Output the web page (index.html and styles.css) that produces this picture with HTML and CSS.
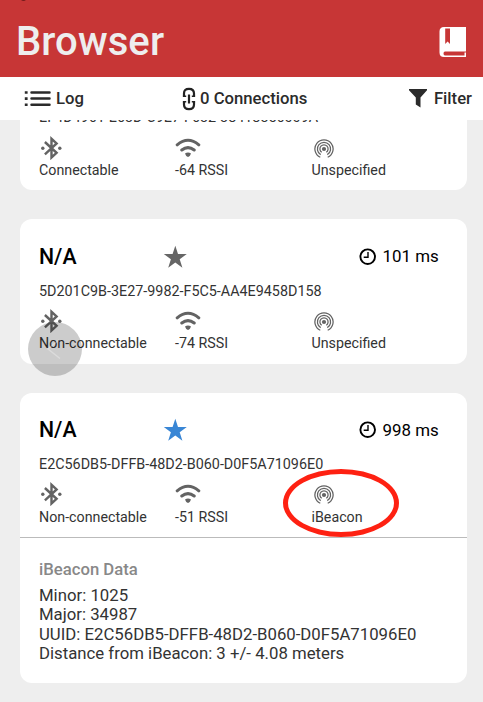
FILE: index.html
```
<!DOCTYPE html>
<html lang="en">
<head>
<meta charset="utf-8">
<title>Browser</title>
<link rel="stylesheet" href="styles.css">
</head>
<body>
<svg class="defs" aria-hidden="true">
  <symbol id="bt" viewBox="0 0 22 24">
    <path d="M4.900 6 16.600 16.800 11.500 21.500V2.800L16.600 7.400 4.900 18.300" fill="none" stroke="currentColor" stroke-width="2.400"/>
    <circle cx="2.800" cy="12.200" r="1.700" fill="currentColor"/><circle cx="19.800" cy="12.200" r="1.700" fill="currentColor"/>
  </symbol>
  <symbol id="wifi" viewBox="0 0 26 24">
    <path d="M2.200 8.800Q13-.2 23.800 8.800M6.800 14Q13 9.200 19.200 14" fill="none" stroke="currentColor" stroke-width="3" stroke-linecap="round"/>
    <path d="M10 17.400Q13 15.400 16 17.400Q15.500 19.700 13 21Q10.500 19.700 10 17.400Z" fill="currentColor"/>
  </symbol>
  <symbol id="beacon" viewBox="0 0 20 20">
    <g fill="none" stroke="currentColor" stroke-width="1.250">
      <path d="M6.300 18.300A9.100 9.100 0 1 1 13.700 18.300"/>
      <path d="M6.700 15.600A6.600 6.600 0 1 1 13.300 15.600"/>
      <path d="M7.700 13.300A4.100 4.100 0 1 1 12.300 13.300"/>
    </g>
    <circle cx="10" cy="10" r="2.100" fill="currentColor"/>
  </symbol>
  <symbol id="star" viewBox="0 0 24 24">
    <path d="M12.300 .8 15 9H23.800L16.700 14.200 19.400 22.800 12.300 17.600 5.200 22.800 7.900 14.200.8 9H9.600Z" fill="currentColor"/>
  </symbol>
  <symbol id="clock" viewBox="0 0 18 18">
    <circle cx="8.700" cy="8.700" r="7.300" fill="none" stroke="currentColor" stroke-width="1.900"/>
    <path d="M9 4V9.200H4.700" fill="none" stroke="currentColor" stroke-width="1.400"/>
  </symbol>
</svg>

<div class="screen">
  <header class="header">
    <span class="camera"></span>
    <h1 class="title">Browser</h1>
    <svg class="book" viewBox="0 0 28 32">
      <path d="M5 1H27V25.500H6Q4.500 25.500 4.500 27.500T6 29.500H25.500V26.500H27V31H5Q.5 31 .5 26.500V5.500Q.5 1 5 1Z" fill="#fff"/>
      <path d="M6.200 2.500H11V18L8.600 15.600 6.200 18Z" fill="#c73636"/>
    </svg>
  </header>

  <nav class="toolbar">
    <div class="tool log">
      <svg width="27" height="18" viewBox="0 0 27 18"><path d="M7.500 2.500H25.500M7.500 8.600H25.500M7.500 14.700H25.500" stroke="#2b2b2b" stroke-width="2.500" stroke-linecap="round"/><path d="M.8 2.500H3.600M.8 8.600H3.600M.8 14.700H3.600" stroke="#2b2b2b" stroke-width="2.600"/></svg>
      <span>Log</span>
    </div>
    <div class="tool connections">
      <svg width="14" height="24" viewBox="0 0 14 24"><path d="M2 9.500V6.500Q2 1.800 7 1.800T12 6.500V9.500M2 14.500V17.500Q2 22.200 7 22.200T12 17.500V14.500M7 7.500V16.500" fill="none" stroke="#222" stroke-width="2.200"/><path d="M.9 9.300H4.200M9.800 9.300H13.100M.9 14.700H4.200M9.800 14.700H13.100" stroke="#222" stroke-width="1.400"/></svg>
      <span>0 Connections</span>
    </div>
    <div class="tool filter">
      <svg width="18" height="19" viewBox="0 0 18 19"><path d="M0 0H18V1.300L11.500 8.500V18.500L6.800 15.500V8.500L0 1.300Z" fill="#2b2b2b"/></svg>
      <span>Filter</span>
    </div>
  </nav>

  <main class="list">
    <article class="card scrolled">
      <div class="uuid">EF4D4961-E63D-C9E7-F632-38418356009A</div>
      <div class="row">
        <div class="cell"><svg class="bt"><use href="#bt"/></svg><span>Connectable</span></div>
        <div class="cell"><svg class="wifi"><use href="#wifi"/></svg><span>-64 RSSI</span></div>
        <div class="cell"><svg class="beacon"><use href="#beacon"/></svg><span>Unspecified</span></div>
      </div>
    </article>

    <article class="card">
      <div class="row head"><b>N/A</b><svg class="star"><use href="#star"/></svg><span class="time"><svg><use href="#clock"/></svg>101 ms</span></div>
      <div class="uuid">5D201C9B-3E27-9982-F5C5-AA4E9458D158</div>
      <div class="row">
        <div class="cell"><svg class="bt"><use href="#bt"/></svg><span>Non-connectable</span></div>
        <div class="cell"><svg class="wifi"><use href="#wifi"/></svg><span>-74 RSSI</span></div>
        <div class="cell"><svg class="beacon"><use href="#beacon"/></svg><span>Unspecified</span></div>
      </div>
      <svg class="back" viewBox="0 0 54 54"><circle cx="27" cy="27" r="27" fill="#000" fill-opacity=".2"/><path d="M31 18 20 27 32 36.500" fill="none" stroke="#fff" stroke-opacity=".3" stroke-width="1.500"/></svg>
    </article>

    <article class="card detailed">
      <div class="row head"><b>N/A</b><svg class="star active"><use href="#star"/></svg><span class="time"><svg><use href="#clock"/></svg>998 ms</span></div>
      <div class="uuid">E2C56DB5-DFFB-48D2-B060-D0F5A71096E0</div>
      <div class="row">
        <div class="cell"><svg class="bt"><use href="#bt"/></svg><span>Non-connectable</span></div>
        <div class="cell"><svg class="wifi"><use href="#wifi"/></svg><span>-51 RSSI</span></div>
        <div class="cell marked"><svg class="beacon"><use href="#beacon"/></svg><span>iBeacon</span><i class="ring"></i></div>
      </div>
      <section class="details">
        <h2>iBeacon Data</h2>
        <p>Minor: 1025</p>
        <p>Major: 34987</p>
        <p>UUID: E2C56DB5-DFFB-48D2-B060-D0F5A71096E0</p>
        <p>Distance from iBeacon: 3 +/- 4.08 meters</p>
      </section>
    </article>
  </main>
</div>
</body>
</html>
```
FILE: styles.css
```
* { box-sizing: border-box; }
body { margin: 0; font-family: Roboto, sans-serif; color: #333; }
svg { display: block; flex: none; }
.defs { display: none; }
.screen { width: 483px; height: 702px; overflow: hidden; display: flex; flex-direction: column; background: #eee; }

.header { position: relative; height: 77px; flex: none; background: #c73636; display: flex; align-items: center; justify-content: space-between; padding: 6px 16px 0 16px; }
.camera { position: absolute; left: 21px; top: -3px; width: 5px; height: 4px; border-radius: 50%; background: #761c1c; }
.title { margin: 0; font-size: 40px; line-height: 46px; font-weight: 500; color: #eee; letter-spacing: .1px; }
.book { width: 28px; height: 32px; }

.toolbar { height: 43px; flex: none; background: #fff; display: grid; grid-template-columns: 158px 1fr auto; align-items: center; padding: 0 11px 0 24px; font-size: 16.700px; font-weight: 500; color: #2b2b2b; }
.tool { display: flex; align-items: center; gap: 5px; line-height: 24px; }
.tool span { padding-top: 1.500px; }
.connections { gap: 4px; }
.filter { gap: 7px; }

.list { flex: 1; min-height: 0; overflow: hidden; padding: 0 16px 0 20px; display: flex; flex-direction: column; gap: 28.900px; }
.card { position: relative; flex: none; height: 144.600px; padding: 22.600px 19px 0; background: #fff; border-radius: 12px; }
.scrolled { height: 70.400px; padding-top: 0; border-radius: 0 0 12px 12px; }
.scrolled .uuid { margin-top: -12.500px; margin-bottom: 8px; }
.detailed { height: 290.500px; }
.row { display: grid; grid-template-columns: 136px 136.500px 1fr; }
.head { height: 30px; grid-template-columns: 124px 195.500px 1fr; align-items: center; color: #000; }
.head b { font-size: 21.300px; font-weight: 500; line-height: 30px; }
.star { width: 24px; height: 24px; color: #666; }
.star.active { color: #3986d5; }
.time { display: flex; align-items: center; gap: 6px; font-size: 16.900px; line-height: 29px; white-space: nowrap; }
.time svg { width: 18px; height: 18px; }
.uuid { margin: 9.800px 0 7.200px; font-size: 14.350px; line-height: 20px; white-space: nowrap; }
.cell { font-size: 14.250px; line-height: 18px; }
.cell svg { height: 24px; margin-bottom: 1.500px; color: #636363; }
.bt { width: 22px; margin-left: 1px; }
.wifi { width: 26px; }
.cell .beacon { width: 20px; height: 20px; margin: 3px 0 2.500px 2.500px; }
.marked { position: relative; }
.ring { position: absolute; left: -28.500px; top: -13.300px; width: 116px; height: 68px; border: 5px solid #fe2112; border-radius: 50%; }
.back { position: absolute; left: 7.500px; top: 103px; width: 54px; height: 54px; }
.details { margin: 11.500px -19px 0; padding: 21.500px 19px 0; border-top: 1px solid #bbb; font-size: 16.750px; }
.details h2 { margin: 0 0 6px; font-size: 16.700px; line-height: 20px; font-weight: 500; color: #888; }
.details p { margin: 0; line-height: 19.500px; white-space: nowrap; }
```
